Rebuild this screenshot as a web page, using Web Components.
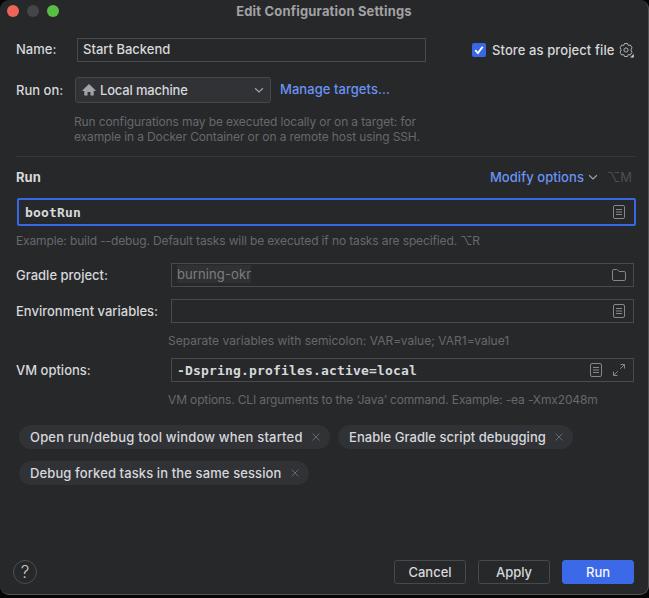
<!DOCTYPE html>
<html lang="en">
<head>
<meta charset="utf-8">
<title>Edit Configuration Settings</title>
<style>
html,body{margin:0;height:100%;background:#050505;overflow:hidden}
</style>
</head>
<body>
<config-dialog></config-dialog>
<script>
const define = (name, html) => customElements.define(name, class extends HTMLElement {
  constructor() {
    super();
    const t = document.createElement('template');
    t.innerHTML = html;
    this.attachShadow({mode: 'open'}).append(t.content.cloneNode(true));
  }
});

const icons = {
  doc: '<rect x="2.5" y="1.5" width="11" height="13" rx="1.5"/><path d="M5 5.5h6M5 8h6M5 10.5h6"/>',
  folder: '<path d="M1.5 3.8q0-1.3 1.3-1.3h2.9q.5 0 .9.4l1.5 1.6h5q1.4 0 1.4 1.4v6.2q0 1.4-1.4 1.4H2.9q-1.4 0-1.4-1.4z"/>',
  expand: '<path d="M9.300 6.700l4-4M9.500 2.500h4v4M6.700 9.300l-4 4M2.500 9.500v4h4"/>',
  chevron: '<path d="M4.1 6.200L8 10l3.900-3.800" stroke-width="1.200"/>',
  close: '<path d="M4.5 4.5l7 7M11.5 4.5l-7 7"/>',
  home: '<path fill="currentColor" stroke="none" d="M8 2L1.500 8.200v.8H3.300V13.500H6.500V10H9.500V13.500H12.700V9H14.500V8.200z"/>',
  gear: '<path d="M6.500 1.500h3l.7 1.900 2.100-.4 1.700 2.800L12.800 8l1.200 2.200-1.700 2.800-2.100-.4-.7 1.900h-3l-.7-1.900-2.100.4L2 10.200 3.200 8 2 5.800l1.700-2.800 2.100.4z" stroke-linejoin="round"/><circle cx="8" cy="8" r="2.100"/><path d="M16 11.500v4.300h-4.300z" fill="#d6d8dc" stroke="#27282a" stroke-width=".5"/>'
};
customElements.define('ui-icon', class extends HTMLElement {
  constructor() { super(); this.attachShadow({mode: 'open'}); }
  connectedCallback() {
    this.shadowRoot.innerHTML = `<style>:host{display:block;flex:none;width:16px;height:16px;color:#85878c}svg{display:block;overflow:visible}</style>
      <svg width="16" height="16" viewBox="0 0 16 16" fill="none" stroke="currentColor" stroke-width="1">${icons[this.getAttribute('name')]}</svg>`;
  }
});

define('title-bar', `<style>
:host{display:grid;grid-template-columns:60px 1fr 60px;align-items:center;height:22px;padding:0 7px;box-sizing:border-box}
.lights{display:flex;gap:8px}
i{width:12px;height:12px;border-radius:50%;background:#444547}
i:first-child{background:#ed6559}i:last-child{background:#58bf45}
b{font-weight:700;text-align:center;color:#a1a2a4;letter-spacing:.18px;padding-bottom:1px}
</style><div class="lights"><i></i><i></i><i></i></div><b><slot></slot></b>`);

define('text-field', `<style>
:host{display:flex;align-items:center;box-sizing:border-box;height:24px;border:1px solid #484a4e;padding:0 6px 0 5px;gap:7px}
:host([focused]){height:28px;border:2px solid #3767e5;border-radius:2px;padding:0 7px 0 6px}
.v{flex:1;white-space:pre;padding-bottom:var(--lift,0)}
</style><span class="v"><slot></slot></span><slot name="end"></slot>`);

define('combo-box', `<style>
:host{display:flex;align-items:center;box-sizing:border-box;width:196px;height:26px;border:1px solid #46484c;border-radius:3px;background:#313236;padding:0 3px 0 5px;gap:3px}
span{flex:1;letter-spacing:-.18px}
ui-icon{color:#a1a3a7}
</style><ui-icon name="home"></ui-icon><span><slot></slot></span><ui-icon name="chevron"></ui-icon>`);

define('check-box', `<style>
:host{display:flex;align-items:center;gap:6px;letter-spacing:.1px}
svg{display:block}
</style><svg width="14" height="14" viewBox="0 0 14 14"><rect width="14" height="14" rx="2" fill="#3968e7"/><path d="M3.200 7.200l2.700 2.900 4.800-6.400" fill="none" stroke="#fff" stroke-width="1.900"/></svg><slot></slot>`);

define('form-hint', `<style>
:host{display:block;font-size:12px;font-weight:400;line-height:15px;color:#66686d;white-space:nowrap}
</style><slot></slot>`);

define('option-chip', `<style>
:host{display:flex;align-items:center;box-sizing:border-box;height:24px;border-radius:12px;background:#313236;padding:0 6px 0 11px;gap:5.400px;white-space:nowrap}
span{flex:1}
ui-icon{color:#66686c}
</style><span><slot></slot></span><ui-icon name="close"></ui-icon>`);

define('push-button', `<style>
:host{display:flex;align-items:center;justify-content:center;box-sizing:border-box;width:72px;height:24px;border:1px solid #47494d;border-radius:3px}
:host([primary]){background:#3b69e7;border-color:#3b69e7;color:#f3f5ff}
</style><slot></slot>`);

define('config-dialog', `<style>
:host{display:flex;flex-direction:column;box-sizing:border-box;width:649px;height:595px;background:#27282a;border:solid #525355;border-width:0 1px 1px 0;border-radius:9px;font:500 13px/16px Inter,"Liberation Sans",sans-serif;color:#d6d8dc;white-space:nowrap}
.row{display:flex;align-items:center;padding-left:16px}
.name{margin-top:16px;height:24px}
.name .l{flex:none;width:61px;padding-bottom:2px}
.name text-field{flex:none;width:349px;--lift:2px}
.name check-box{margin-left:46px}
.name ui-icon{margin-left:3px;color:#b0b2b6}
.on{margin-top:15px;height:26px}
.on .l{width:59px}
.link{color:#6a93f5}
.on .link{margin-left:9px;padding-bottom:2px;letter-spacing:.05px}
.targets{margin:11px 0 0 74px;letter-spacing:-.12px}
hr{border:0;height:1px;background:#35373a;margin:12px 12px 0 16px;flex:none}
.head{margin-top:10px;height:20px}
.head b{flex:1;font-weight:700}
.head .link{letter-spacing:.06px}
.head ui-icon{color:#a1a3a7;margin-left:1px}
.key{color:#4d4f53;font-weight:400;margin:0 16px 0 6px}
.tasks{margin:11px 12px 0 17px}
.mono{font:700 13px/16px "DejaVu Sans Mono",monospace;letter-spacing:.174px}
.example{margin:7px 0 0 16px;letter-spacing:-.129px}
.indent{margin:10px 0 0 168px;letter-spacing:.02px}
.vm{letter-spacing:-.135px}
.grid{display:grid;grid-template-columns:155px 463px;padding-left:16px;align-items:center;margin-top:10px}
.project{margin-top:15px}
.env{margin-top:12px}
.project text-field{--lift:2px}
mark{background:#303132;color:#7c7e82;font-weight:400;letter-spacing:.1px;padding:1px 0}
.chips{display:flex;flex-wrap:wrap;gap:12px 8px;padding:0 60px 0 19px;margin-top:18px}
.foot{display:flex;align-items:center;gap:12px;margin:75px 14px 0 13px;height:24px}
.help{display:grid;place-items:center;box-sizing:border-box;width:24px;height:24px;border:1px solid #4d4f52;border-radius:50%;font-size:17px;font-weight:300;color:#c9cbcf;margin-right:auto}
</style>
<title-bar>Edit Configuration Settings</title-bar>
<div class="row name"><span class="l">Name:</span><text-field>Start Backend</text-field><check-box>Store as project file</check-box><ui-icon name="gear"></ui-icon></div>
<div class="row on"><span class="l">Run on:</span><combo-box>Local machine</combo-box><span class="link">Manage targets...</span></div>
<form-hint class="targets">Run configurations may be executed locally or on a target: for<br>example in a Docker Container or on a remote host using SSH.</form-hint>
<hr>
<div class="row head"><b>Run</b><span class="link">Modify options</span><ui-icon name="chevron"></ui-icon><span class="key">⌥M</span></div>
<text-field focused class="tasks"><span class="mono">bootRun</span><ui-icon slot="end" name="doc"></ui-icon></text-field>
<form-hint class="example">Example: build --debug. Default tasks will be executed if no tasks are specified. ⌥R</form-hint>
<div class="grid project"><span>Gradle project:</span><text-field><mark>burning-okr</mark><ui-icon slot="end" name="folder"></ui-icon></text-field></div>
<div class="grid env"><span>Environment variables:</span><text-field><ui-icon slot="end" name="doc"></ui-icon></text-field></div>
<form-hint class="indent">Separate variables with semicolon: VAR=value; VAR1=value1</form-hint>
<div class="grid"><span>VM options:</span><text-field><span class="mono">-Dspring.profiles.active=local</span><ui-icon slot="end" name="doc"></ui-icon><ui-icon slot="end" name="expand"></ui-icon></text-field></div>
<form-hint class="indent vm">VM options. CLI arguments to the ‘Java’ command. Example: -ea -Xmx2048m</form-hint>
<div class="chips"><option-chip style="letter-spacing:.18px">Open run/debug tool window when started</option-chip><option-chip style="letter-spacing:.04px">Enable Gradle script debugging</option-chip><option-chip style="letter-spacing:.11px">Debug forked tasks in the same session</option-chip></div>
<div class="foot"><span class="help">?</span><push-button>Cancel</push-button><push-button>Apply</push-button><push-button primary>Run</push-button></div>
`);
</script>
</body>
</html>
